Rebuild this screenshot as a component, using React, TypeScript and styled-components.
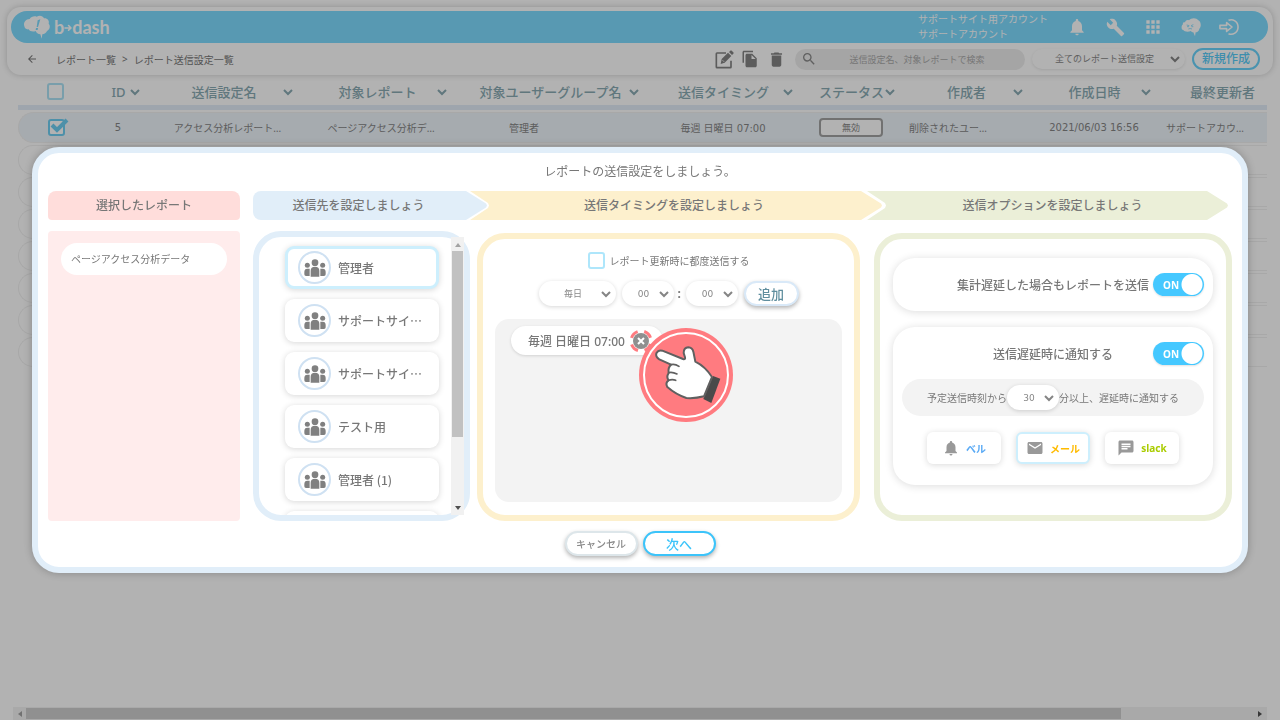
import React from "react";
import styled, { createGlobalStyle, css } from "styled-components";
import {
  MdApps,
  MdArrowBack,
  MdBuild,
  MdChat,
  MdDelete,
  MdEmail,
  MdFileCopy,
  MdNotifications,
  MdSearch,
} from "react-icons/md";

const sans = '"Noto Sans", "Noto Sans CJK JP", sans-serif';
const jp = '"Noto Sans CJK JP", sans-serif';
const wide = '"DejaVu Sans", "Noto Sans CJK JP", sans-serif';

const GlobalStyle = createGlobalStyle`
  * { box-sizing: border-box; }
  body { margin: 0; background: #fff; font-family: ${sans}; font-size: 10px; color: #777; }
  button, input, select { font-family: inherit; margin: 0; }
`;

/* ---------- page ---------- */

const Page = styled.div`
  min-height: 100vh;
  display: flex;
  flex-direction: column;
  overflow: hidden;
`;

const HeaderCard = styled.header`
  margin: 7px 7px 0;
  padding: 4px 5px 0 4px;
  border-radius: 14px;
  box-shadow: 0 0 6px rgba(0, 0, 0, 0.2);
`;

const BrandBar = styled.div`
  height: 32px;
  padding: 0 29px 0 12px;
  border-radius: 16px;
  background: #7edcff;
  color: #fff;
  display: flex;
  align-items: center;
`;

const Logo = styled.a`
  display: flex;
  align-items: center;
  margin-right: auto;
  color: #fff;
  text-decoration: none;
  font: 700 18px/24px Lato, sans-serif;
`;

const LogoWord = styled.span`
  margin-left: 3px;
  display: flex;
  align-items: center;
`;

const Account = styled.div`
  margin-right: 19px;
  font-size: 10px;
  line-height: 15px;
`;

const BarIcons = styled.nav`
  display: flex;
  gap: 18px;
`;

const IconButton = styled.button`
  width: 20px;
  height: 20px;
  padding: 0;
  border: 0;
  background: none;
  color: inherit;
  display: flex;
  align-items: center;
  justify-content: center;
`;

const ToolRow = styled.div`
  height: 32px;
  padding: 0 8px 0 11px;
  display: flex;
  align-items: center;
  gap: 7px;
`;

const Crumbs = styled.nav`
  margin: 0 auto 0 7px;
  display: flex;
  gap: 6px;
  a, span { color: #777; text-decoration: none; }
`;

const ToolIcons = styled.div`
  display: flex;
  gap: 6px;
  margin-right: 2px;
  color: #858585;
`;

const Search = styled.label`
  width: 230px;
  height: 21px;
  padding: 0 8px 0 6px;
  border-radius: 11px;
  background: #ededed;
  color: #8a8a8a;
  display: flex;
  align-items: center;
  input {
    flex: 1;
    min-width: 0;
    border: 0;
    background: none;
    outline: 0;
    text-align: center;
    font-size: 9px;
    color: #777;
  }
  input::placeholder { color: #aaa; }
`;

const CreateButton = styled.button`
  height: 22px;
  width: 68px;
  padding: 0;
  border: 2px solid #6ad3fb;
  border-radius: 11px;
  background: #fff;
  color: #5accf8;
  font-size: 12px;
  font-weight: 500;
  line-height: 18px;
`;

/* ---------- drop-down ---------- */

const SelectWrap = styled.span<{ $w: number; $h?: number; $flat?: boolean }>`
  width: ${(p) => p.$w}px;
  height: ${(p) => p.$h ?? 25}px;
  border-radius: 13px;
  background: #fff;
  box-shadow: ${(p) => (p.$flat ? "0 1px 3px rgba(0,0,0,.1)" : "0 1px 4px rgba(0,0,0,.16)")};
  display: grid;
  align-items: center;
  select, svg { grid-area: 1 / 1; }
  svg { justify-self: end; margin-right: 5px; pointer-events: none; color: #858585; }
  select {
    appearance: none;
    width: 100%;
    height: 100%;
    padding: 0 16px 0 8px;
    border: 0;
    border-radius: inherit;
    background: none;
    color: #888;
    font-family: ${wide};
    font-size: 9px;
    text-align: center;
    text-align-last: center;
  }
`;

const Chevron = () => (
  <svg width="10" height="10" viewBox="0 0 10 10" fill="none" stroke="currentColor" strokeWidth="2">
    <path d="M1 3l4 4 4-4" />
  </svg>
);

const Dropdown = (p: { label: string; value: string; w: number; h?: number; flat?: boolean }) => (
  <SelectWrap $w={p.w} $h={p.h} $flat={p.flat}>
    <select aria-label={p.label} defaultValue={p.value}>
      <option>{p.value}</option>
    </select>
    <Chevron />
  </SelectWrap>
);

/* ---------- table ---------- */

const TableArea = styled.main`
  flex: 1;
  margin: 0 13px 0 18px;
  overflow: hidden;
`;

const Table = styled.table`
  width: 1272px;
  table-layout: fixed;
  border-collapse: separate;
  border-spacing: 0 2px;
  th, td { padding: 0; font-weight: 400; }
  thead th {
    height: 33px;
    border-bottom: 5px solid #e3edf8;
    color: #8aabb4;
  }
`;

const HeadCell = styled.div`
  padding: 2px 11px 0 14px;
  display: flex;
  align-items: center;
  font-size: 13px;
  font-weight: 500;
  line-height: 20px;
  span { flex: 1; text-align: center; white-space: nowrap; }
`;

const Row = styled.tr<{ $on?: boolean }>`
  td {
    height: ${(p) => (p.$on ? 31 : 30)}px;
    border: solid #f1f1f1;
    border-width: 1px 0;
    text-align: center;
    white-space: nowrap;
    font-size: 10px;
    color: #868686;
    background: ${(p) => (p.$on ? "#eef5fb" : "#fff")};
  }
  td:first-child { border-left-width: 1px; border-radius: 16px 0 0 16px; }
`;

const Cell = styled.div<{ $reserve?: number; $num?: boolean }>`
  padding-right: ${(p) => p.$reserve ?? 8}px;
  font-family: ${(p) => (p.$num ? wide : sans)};
`;

const StatusBadge = styled.span`
  display: inline-block;
  width: 64px;
  height: 19px;
  border: 2px solid #a3a3a3;
  border-radius: 4px;
  background: #fff;
  font-size: 9px;
  line-height: 15px;
`;

const Box = styled.input<{ $color: string }>`
  appearance: none;
  width: 17px;
  height: 17px;
  border: 2px solid ${(p) => p.$color};
  border-radius: 3px;
  background: #fff;
  display: block;
`;

const CheckHolder = styled.span`
  position: relative;
  display: block;
  width: 17px;
  margin: 0 auto;
  svg { position: absolute; left: 1px; top: -2px; pointer-events: none; }
`;

const HScroll = styled.div`
  height: 13px;
  margin: 0 13px;
  padding: 0 5px;
  background: #f3f3f3;
  display: flex;
  align-items: center;
  justify-content: space-between;
`;

const HThumb = styled.div`
  flex: 1;
  margin: 0 137px 0 4px;
  height: 11px;
  background: #cfcfcf;
`;

const Arrow = styled.i<{ $dir: "up" | "down" | "left" | "right"; $dark?: boolean }>`
  width: 0;
  height: 0;
  border: 3px solid transparent;
  ${(p) => {
    const c = p.$dark ? "#505050" : "#a3a3a3";
    switch (p.$dir) {
      case "up": return css`border-bottom: 4px solid ${c}; border-top: 0;`;
      case "down": return css`border-top: 4px solid ${c}; border-bottom: 0;`;
      case "left": return css`border-right: 4px solid ${c}; border-left: 0;`;
      default: return css`border-left: 4px solid ${c}; border-right: 0;`;
    }
  }}
`;

/* ---------- dialog ---------- */

const Backdrop = styled.div`
  position: fixed;
  inset: 0;
  padding: 0 32px;
  background: rgba(0, 0, 0, 0.3);
  display: flex;
  align-items: center;
`;

const Dialog = styled.section`
  flex: 1;
  min-width: 0;
  padding: 10px 10px 11px;
  border: 6px solid #e1eef9;
  border-radius: 27px;
  background: #fff;
  box-shadow: 0 0 10px rgba(0, 0, 0, 0.25);
`;

const Title = styled.h1`
  margin: 0 0 10px;
  font-size: 12px;
  font-weight: 400;
  line-height: 18px;
  text-align: center;
`;

const Body = styled.div`
  display: flex;
  gap: 13px;
`;

const Column = styled.div<{ $fixed?: boolean }>`
  flex: ${(p) => (p.$fixed ? "0 0 192px" : "1")};
  min-width: 0;
  display: flex;
  flex-direction: column;
  gap: 11px;
`;

const StepText = styled.h2`
  margin: 0;
  height: 29px;
  font-size: 12px;
  font-weight: 500;
  line-height: 29px;
  text-align: center;
  color: #777;
  white-space: nowrap;
`;

const PinkHead = styled(StepText)`
  border-radius: 8px 8px 4px 4px;
  background: #ffdddb;
`;

const PinkPanel = styled.div`
  height: 290px;
  padding: 12px 13px;
  border-radius: 4px;
  background: #ffecec;
`;

const ReportPill = styled.div`
  height: 32px;
  padding: 0 10px;
  border-radius: 16px;
  background: #fff;
  line-height: 32px;
`;

const Steps = styled.div`
  display: grid;
  grid-template-columns: minmax(0, 217fr) minmax(0, 397fr) minmax(0, 365fr);
`;

const tip = "calc(100% - 21px) 0, calc(100% - 1px) 43%, 100% 50%, calc(100% - 1px) 57%, calc(100% - 21px) 100%";

const Step = styled(StepText)<{ $bg: string; $right: number; $first?: boolean; $pad?: string }>`
  margin-right: ${(p) => p.$right}px;
  padding: ${(p) => p.$pad ?? "0"};
  background: ${(p) => p.$bg};
  ${(p) =>
    p.$first
      ? css`border-radius: 8px 0 0 8px; clip-path: polygon(0 0, ${tip}, 0 100%);`
      : css`clip-path: polygon(0 0, ${tip}, 0 100%, 18px 59%, 19px 50%, 18px 41%);`}
`;

const Panels = styled.div`
  display: grid;
  grid-template-columns: minmax(0, 217fr) minmax(0, 390fr) minmax(0, 372fr);
  align-items: end;
`;

const Panel = styled.div<{ $color: string; $short?: boolean; $gap?: number }>`
  min-width: 0;
  height: ${(p) => (p.$short ? 288 : 290)}px;
  margin-left: ${(p) => p.$gap ?? 0}px;
  border: 6px solid ${(p) => p.$color};
  border-radius: 28px;
`;

const ListPanel = styled(Panel)`
  display: flex;
`;

const GroupList = styled.ul`
  flex: 1;
  min-width: 0;
  margin: 0;
  padding: 9px 12px 0 26px;
  overflow: hidden;
  list-style: none;
  border-radius: 22px 0 0 22px;
`;

const GroupItem = styled.button<{ $on?: boolean }>`
  width: 100%;
  height: 43px;
  margin-bottom: 10px;
  padding: 0 0 0 ${(p) => (p.$on ? 10 : 13)}px;
  border: ${(p) => (p.$on ? "3px solid #cdeffd" : "0")};
  border-radius: 9px;
  background: #fff;
  box-shadow: 0 1px 6px rgba(0, 0, 0, 0.16);
  color: #777;
  font-family: ${jp};
  font-size: 12px;
  font-weight: 500;
  display: flex;
  align-items: center;
  gap: 7px;
  white-space: nowrap;
`;

const Avatar = styled.span`
  width: 33px;
  height: 33px;
  border: 2px solid #cfe1f2;
  border-radius: 50%;
  color: #808080;
  display: flex;
  align-items: center;
  justify-content: center;
`;

const VScroll = styled.div`
  width: 13px;
  padding: 6px 0 5px;
  background: #f1f1f1;
  display: flex;
  flex-direction: column;
  align-items: center;
`;

const VThumb = styled.div`
  flex: 1;
  width: 11px;
  margin: 4px 0 69px;
  background: #c1c1c1;
`;

const TimingPanel = styled(Panel)`
  padding: 13px 12px 13px;
  display: flex;
  flex-direction: column;
  align-items: center;
`;

const CheckLabel = styled.label`
  display: flex;
  align-items: center;
  gap: 5px;
  height: 17px;
  font-size: 10px;
`;

const TimeRow = styled.div`
  margin: 12px 0 13px;
  display: flex;
  align-items: center;
  gap: 6px;
  font-size: 12px;
  font-weight: 700;
`;

const Colon = styled.span`
  margin: 0 -2px;
  width: 4px;
`;

const PillButton = styled.button<{ $w: number; $border: string; $color: string; $size: number }>`
  width: ${(p) => p.$w}px;
  height: 25px;
  padding: 0;
  border: 2px solid ${(p) => p.$border};
  border-radius: 13px;
  background: #fff;
  box-shadow: 0 2px 4px rgba(0, 0, 0, 0.3);
  color: ${(p) => p.$color};
  font-size: ${(p) => p.$size}px;
  font-weight: 500;
  line-height: 20px;
`;

const ChipArea = styled.div`
  flex: 1;
  align-self: stretch;
  padding: 7px 16px;
  border-radius: 14px;
  background: #f3f3f3;
`;

const Chip = styled.div`
  position: relative;
  width: 152px;
  height: 29px;
  padding: 0 13px 0 17px;
  border-radius: 15px;
  background: #fff;
  box-shadow: 0 1px 3px rgba(0, 0, 0, 0.14);
  display: flex;
  align-items: center;
  justify-content: space-between;
  font-size: 12px;
  font-weight: 500;
  white-space: nowrap;
`;

const CloseButton = styled.button`
  width: 18px;
  height: 18px;
  padding: 0;
  border: 0;
  border-radius: 50%;
  background: none;
  svg { display: block; margin: -3px; }
`;

const Pointer = styled.span`
  position: absolute;
  left: 128px;
  top: 2px;
  svg { display: block; }
`;

const OptionPanel = styled(Panel)`
  padding: 19px 13px;
  display: flex;
  flex-direction: column;
  gap: 16px;
`;

const Card = styled.div`
  padding: 15px 9px;
  border-radius: 22px;
  background: #fff;
  box-shadow: 0 1px 8px rgba(0, 0, 0, 0.14);
`;

const SwitchRow = styled.label`
  height: 23px;
  display: grid;
  grid-template-columns: 1fr auto 1fr;
  align-items: center;
  font-size: 12px;
  font-weight: 500;
  white-space: nowrap;
`;

const Switch = styled.span`
  grid-column: 3;
  justify-self: end;
  width: 51px;
  height: 23px;
  display: grid;
  align-items: center;
  input, span { grid-area: 1 / 1; }
  input {
    appearance: none;
    width: 100%;
    height: 100%;
    border-radius: 12px;
    background: radial-gradient(circle at 39px 50%, #fff 10px, #45c8ff 11px);
    box-shadow: 0 1px 2px rgba(0, 0, 0, 0.12);
  }
  span {
    padding-left: 10px;
    color: #fff;
    font-size: 10px;
    font-weight: 700;
    pointer-events: none;
    z-index: 1;
  }
`;

const SwitchText = styled.span`
  grid-column: 2;
`;

const DelayBar = styled.label`
  height: 37px;
  margin: 14px 0 16px;
  border-radius: 19px;
  background: #f3f3f3;
  display: flex;
  align-items: center;
  justify-content: center;
  font-family: ${jp};
  white-space: nowrap;
`;

const Channels = styled.div`
  margin-bottom: 6px;
  display: flex;
  justify-content: center;
  gap: 15px;
`;

const Channel = styled.button<{ $color: string; $on?: boolean }>`
  width: 74px;
  height: 32px;
  padding: 0;
  border: ${(p) => (p.$on ? "2px solid #cdeffd" : "0")};
  border-radius: 6px;
  background: #fff;
  box-shadow: 0 1px 6px rgba(0, 0, 0, 0.15);
  color: ${(p) => p.$color};
  font-size: 10px;
  font-weight: 700;
  display: flex;
  align-items: center;
  justify-content: center;
  gap: 6px;
  svg { color: #999; }
`;

const Footer = styled.footer`
  margin-top: 10px;
  display: flex;
  justify-content: center;
  gap: 5px;
`;

/* ---------- drawings ---------- */

const BrainLogo = () => (
  <svg width="28" height="24" viewBox="0 0 84 72">
    <path
      fill="#fff"
      d="M4 34C0 22 9 12 20 12 24 5 34 2 41 5 50 0 60 3 63 10 73 9 80 17 77 26 84 34 79 44 72 48 70 54 64 57 58 58L56 71 52 58C45 58 40 53 38 48 30 52 20 49 17 43 10 44 5 40 4 34Z"
    />
    <path d="M52 13l-8 3-3 20h4zM39 39l6 0-1 6-6 0z" fill="#7edcff" />
  </svg>
);

const LogoArrow = () => (
  <svg width="8" height="8" viewBox="0 0 8 8" fill="none" stroke="#fff" strokeWidth="1.6" strokeLinecap="round" strokeLinejoin="round">
    <path d="M1 5h6M4.6 2.5L7 5 4.6 7.2" />
  </svg>
);

const BrainFace = () => (
  <svg width="20" height="20" viewBox="0 0 60 60">
    <path
      fill="#fff"
      d="M2 34C1 28 3 24 6 22 4 17 9 15 12 16 14 9 20 8 24 10 30 2 46 1 52 10 60 14 62 28 55 35 54 43 48 46 44 46L42 58 37 46C33 46 31 44 30 42 20 46 10 44 7 39 4 39 2 37 2 34Z"
    />
    <path d="M17 24l8 2M30 26l7-3M18 29h6M31 29h6M22 36q5-3 11 0" stroke="#7edcff" strokeWidth="2.5" fill="none" />
  </svg>
);

const LogoutIcon = () => (
  <svg width="21" height="18" viewBox="0 0 63 54" fill="none" stroke="currentColor" strokeWidth="5">
    <path d="M30 6C43 0 60 9 60 27S43 54 30 48" />
    <path d="M3 22h21v-9l17 14-17 14v-9H3z" strokeLinejoin="round" />
  </svg>
);

const EditIcon = () => (
  <svg width="19" height="19" viewBox="0 0 57 57">
    <path d="M33 9H6q-2 0-2 2v40q0 2 2 2h40q2 0 2-2V32" fill="none" stroke="currentColor" strokeWidth="5" />
    <path fill="currentColor" d="M17 42l3-15L39 8l10 10-20 20zM42 6l4-4q2-2 4 0l5 5q2 2 0 4l-4 4z" />
    <path d="M22 30l6 6" stroke="#fff" strokeWidth="2" />
  </svg>
);

const PeopleIcon = () => (
  <svg width="22" height="18" viewBox="0 0 66 54" fill="currentColor">
    <circle cx="33" cy="11" r="10" />
    <circle cx="10" cy="19" r="7.5" />
    <circle cx="56" cy="19" r="7.5" />
    <path d="M20 53V35q0-12 13-12t13 12v18zM17 29v22H6q-5 0-5-5v-7q0-10 9-10zM49 29v22h11q5 0 5-5v-7q0-10-9-10z" />
  </svg>
);

const CloseIcon = () => (
  <svg width="24" height="24" viewBox="0 0 24 24">
    <circle cx="12" cy="12" r="10" fill="none" stroke="#ff7b80" strokeWidth="3" strokeDasharray="9 6.7" strokeDashoffset="-3" />
    <circle cx="12" cy="12" r="8" fill="#8f8f8f" />
    <path d="M9 9l6 6M15 9l-6 6" stroke="#fff" strokeWidth="2" />
  </svg>
);

const HandPointer = () => (
  <svg width="94" height="94" viewBox="492 309 282 282">
    <circle cx="633" cy="450" r="141" fill="#ff7b80" />
    <circle cx="633" cy="450" r="126" fill="none" stroke="#fff" strokeWidth="6" />
    <path d="M714 453l22 8-27 73-24-12z" fill="#4a4a4a" />
    <path
      d="M562 377L624 402Q632 404 630 397L626 384Q626 368 640 367 652 368 655 380L661 410Q690 424 711 456L687 514Q660 521 634 519 602 508 577 486 570 473 581 466 573 456 581 444 578 428 588 419L553 403Q541 396 544 385 550 374 562 377Z"
      fill="#fff"
      stroke="#606060"
      strokeWidth="6"
      strokeLinejoin="round"
    />
    <path d="M588 419Q600 416 612 424M581 443Q592 440 606 447M581 466Q592 462 602 466" fill="none" stroke="#606060" strokeWidth="5" strokeLinecap="round" />
  </svg>
);

/* ---------- content ---------- */

const columns = [
  { name: "ID", w: 58 },
  { name: "送信設定名", w: 153 },
  { name: "対象レポート", w: 154 },
  { name: "対象ユーザーグループ名", w: 192 },
  { name: "送信タイミング", w: 154 },
  { name: "ステータス", w: 102 },
  { name: "作成者", w: 128 },
  { name: "作成日時", w: 128 },
  { name: "最終更新者", w: 128 },
];

const groups = ["管理者", "サポートサイ…", "サポートサイ…", "テスト用", "管理者 (1)", ""];

export default function App() {
  return (
    <>
      <GlobalStyle />
      <Page>
        <HeaderCard>
          <BrandBar>
            <Logo href="#" aria-label="b→dash">
              <BrainLogo />
              <LogoWord>b<LogoArrow />dash</LogoWord>
            </Logo>
            <Account>
              サポートサイト用アカウント
              <br />
              サポートアカウント
            </Account>
            <BarIcons>
              <IconButton aria-label="通知"><MdNotifications size={20} /></IconButton>
              <IconButton aria-label="設定"><MdBuild size={19} /></IconButton>
              <IconButton aria-label="アプリ"><MdApps size={20} /></IconButton>
              <IconButton aria-label="サポート"><BrainFace /></IconButton>
              <IconButton aria-label="ログアウト"><LogoutIcon /></IconButton>
            </BarIcons>
          </BrandBar>
          <ToolRow>
            <IconButton aria-label="戻る"><MdArrowBack size={12} /></IconButton>
            <Crumbs>
              <a href="#">レポート一覧</a>
              <span>&gt;</span>
              <span>レポート送信設定一覧</span>
            </Crumbs>
            <ToolIcons>
              <IconButton aria-label="編集"><EditIcon /></IconButton>
              <IconButton aria-label="複製"><MdFileCopy size={18} /></IconButton>
              <IconButton aria-label="削除"><MdDelete size={19} /></IconButton>
            </ToolIcons>
            <Search>
              <MdSearch size={16} />
              <input aria-label="検索" placeholder="送信設定名、対象レポートで検索" />
            </Search>
            <Dropdown label="表示対象" value="全てのレポート送信設定" w={153} h={20} flat />
            <CreateButton>新規作成</CreateButton>
          </ToolRow>
        </HeaderCard>

        <TableArea>
          <Table>
            <colgroup>
              <col width={75} />
              {columns.map((c) => <col key={c.name} width={c.w} />)}
            </colgroup>
            <thead>
              <tr>
                <th>
                  <CheckHolder><Box type="checkbox" aria-label="すべて選択" $color="#aee3f5" /></CheckHolder>
                </th>
                {columns.map((c) => (
                  <th key={c.name}>
                    <HeadCell><span>{c.name}</span><Chevron /></HeadCell>
                  </th>
                ))}
              </tr>
            </thead>
            <tbody>
              <Row $on>
                <td>
                  <CheckHolder>
                    <Box type="checkbox" aria-label="選択" defaultChecked $color="#6fcff2" />
                    <svg width="20" height="17" viewBox="0 0 20 17" fill="none" stroke="#6fcff2" strokeWidth="4">
                      <path d="M3 8l5 5L18 3" />
                    </svg>
                  </CheckHolder>
                </td>
                <td><Cell $num>5</Cell></td>
                <td><Cell $reserve={0}>アクセス分析レポート…</Cell></td>
                <td><Cell $reserve={0}>ページアクセス分析デ…</Cell></td>
                <td><Cell $reserve={60}>管理者</Cell></td>
                <td><Cell $num>毎週 日曜日 07:00</Cell></td>
                <td><Cell><StatusBadge>無効</StatusBadge></Cell></td>
                <td><Cell $reserve={44}>削除されたユー…</Cell></td>
                <td><Cell $num>2021/06/03 16:56</Cell></td>
                <td><Cell $reserve={42}>サポートアカウ…</Cell></td>
              </Row>
              {Array.from({ length: 7 }, (_, i) => (
                <Row key={i}><td /><td colSpan={9} /></Row>
              ))}
            </tbody>
          </Table>
        </TableArea>
        <HScroll>
          <Arrow $dir="left" />
          <HThumb />
          <Arrow $dir="right" $dark />
        </HScroll>
      </Page>

      <Backdrop>
        <Dialog role="dialog" aria-labelledby="dialog-title">
          <Title id="dialog-title">レポートの送信設定をしましょう。</Title>
          <Body>
            <Column $fixed>
              <PinkHead>選択したレポート</PinkHead>
              <PinkPanel><ReportPill>ページアクセス分析データ</ReportPill></PinkPanel>
            </Column>
            <Column>
              <Steps>
                <Step $bg="#e1eef9" $first $right={-17} $pad="0 23px 0 0">送信先を設定しましょう</Step>
                <Step $bg="#fdf0cd" $right={-15} $pad="0 4px 0 0">送信タイミングを設定しましょう</Step>
                <Step $bg="#ebefd8" $right={4} $pad="0 0 0 10px">送信オプションを設定しましょう</Step>
              </Steps>
              <Panels>
                <ListPanel $color="#e1eef9">
                  <GroupList>
                    {groups.map((g, i) => (
                      <li key={i}>
                        <GroupItem $on={i === 0}>
                          <Avatar><PeopleIcon /></Avatar>
                          {g}
                        </GroupItem>
                      </li>
                    ))}
                  </GroupList>
                  <VScroll>
                    <Arrow $dir="up" />
                    <VThumb />
                    <Arrow $dir="down" $dark />
                  </VScroll>
                </ListPanel>

                <TimingPanel $color="#fdf0cd" $short $gap={7}>
                  <CheckLabel>
                    <Box type="checkbox" $color="#aee6fb" />
                    レポート更新時に都度送信する
                  </CheckLabel>
                  <TimeRow>
                    <Dropdown label="頻度" value="毎日" w={77} />
                    <Dropdown label="時" value="00" w={52} />
                    <Colon>:</Colon>
                    <Dropdown label="分" value="00" w={52} />
                    <PillButton $w={55} $border="#d9e9f8" $color="#5f8e9e" $size={13}>追加</PillButton>
                  </TimeRow>
                  <ChipArea>
                    <Chip>
                      毎週 日曜日 07:00
                      <CloseButton aria-label="削除"><CloseIcon /></CloseButton>
                      <Pointer><HandPointer /></Pointer>
                    </Chip>
                  </ChipArea>
                </TimingPanel>

                <OptionPanel $color="#ebefd8" $short $gap={14}>
                  <Card>
                    <SwitchRow>
                      <SwitchText>集計遅延した場合もレポートを送信</SwitchText>
                      <Switch><input type="checkbox" role="switch" defaultChecked /><span>ON</span></Switch>
                    </SwitchRow>
                  </Card>
                  <Card>
                    <SwitchRow>
                      <SwitchText>送信遅延時に通知する</SwitchText>
                      <Switch><input type="checkbox" role="switch" defaultChecked /><span>ON</span></Switch>
                    </SwitchRow>
                    <DelayBar>
                      予定送信時刻から
                      <Dropdown label="遅延時間" value="30" w={52} />
                      分以上、遅延時に通知する
                    </DelayBar>
                    <Channels>
                      <Channel $color="#5aaaf5"><MdNotifications size={18} />ベル</Channel>
                      <Channel $color="#ffbb00" $on><MdEmail size={18} />メール</Channel>
                      <Channel $color="#aacc00"><MdChat size={18} />slack</Channel>
                    </Channels>
                  </Card>
                </OptionPanel>
              </Panels>
            </Column>
          </Body>
          <Footer>
            <PillButton $w={73} $border="#dde6ea" $color="#888" $size={10}>キャンセル</PillButton>
            <PillButton $w={73} $border="#3cc4fa" $color="#3cc4fa" $size={13}>次へ</PillButton>
          </Footer>
        </Dialog>
      </Backdrop>
    </>
  );
}
